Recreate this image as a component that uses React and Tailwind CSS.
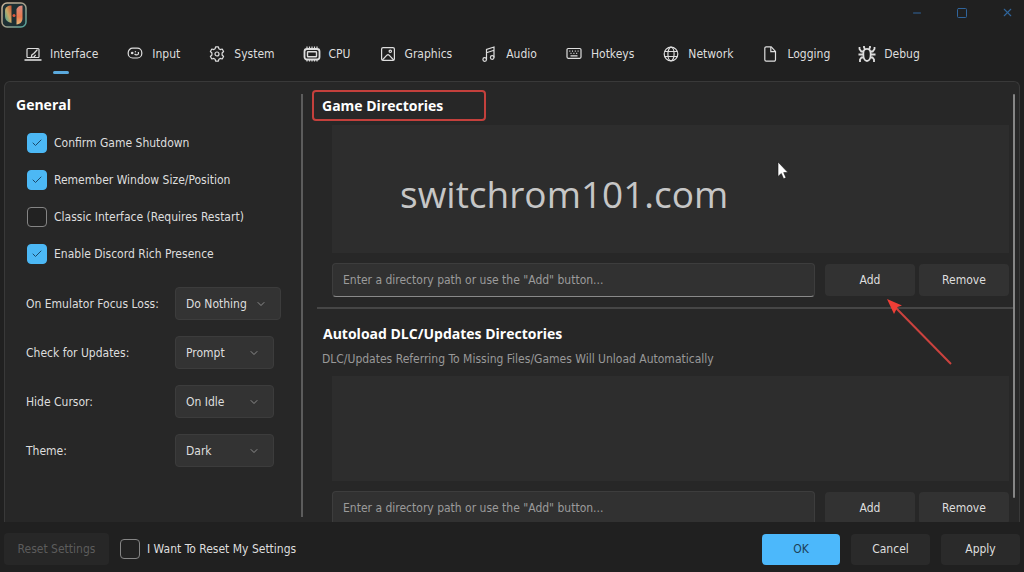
import { useState } from 'react';
import { Check, ChevronDown, Minus, Square, X } from 'lucide-react';

const icons = {
  interface: (
    <>
      <path d="M3 12.5V4.5a1 1 0 0 1 1-1h10a1 1 0 0 1 1 1v8" />
      <path d="M0.5 15h17" strokeWidth="1.6" />
      <path d="M3 12.5h12M13.5 4.5l-3.7 4M9.8 8.5l-2 1.4-.6 2.6 3-.7 1.4-2" />
    </>
  ),
  input: (
    <>
      <rect x="2.2" y="3.2" width="13.6" height="9.8" rx="4.5" />
      <circle cx="6.2" cy="8" r="1.3" fill="currentColor" stroke="none" />
      <path d="M8.6 8.9c.8 1.4 3.4 1.4 3.800 0V6.900" />
      <circle cx="9.400" cy="6.800" r="0.700" fill="currentColor" stroke="none" />
    </>
  ),
  system: (
    <>
      <path d="M7.600 1.800h2.800l.5 2 1.300.8 2-.6 1.400 2.500-1.500 1.500v2l1.500 1.500-1.400 2.500-2-.6-1.300.8-.5 2H7.600l-.5-2-1.300-.8-2 .6-1.400-2.500L3.900 10V8L2.400 6.500 3.800 4l2 .6 1.300-.8z" strokeLinejoin="round" />
      <circle cx="9" cy="9" r="2" />
    </>
  ),
  cpu: (
    <>
      <rect x="1.500" y="4" width="15" height="10.500" rx="2.500" strokeWidth="1.800" />
      <rect x="4.500" y="6.800" width="9" height="5" rx="0.500" strokeWidth="1.400" />
      <path d="M4 3.500V1.500M6.500 3.500V1.500M9 3.500V1.500M11.500 3.500V1.500M14 3.500V1.500M4 15v1.500M6.500 15v1.500M9 15v1.500M11.500 15v1.500M14 15v1.500" />
    </>
  ),
  graphics: (
    <>
      <rect x="2.600" y="2.600" width="12.800" height="12.800" rx="1.500" />
      <circle cx="11.300" cy="6.300" r="1.200" />
      <path d="M3.300 15l4.600-4.800q1.100-1 2.200 0l4.600 4.800" />
    </>
  ),
  audio: (
    <>
      <path d="M6.500 14.500V4.500L14 2v10.500M6.500 7.700L14 5.200" />
      <circle cx="4.700" cy="14.500" r="1.800" />
      <circle cx="12.200" cy="12.500" r="1.800" />
    </>
  ),
  hotkeys: (
    <>
      <rect x="2" y="3.500" width="14" height="9.800" rx="1.200" />
      <path d="M4.300 6.200h1M7 6.200h1M9.800 6.200h1M12.600 6.200h1M5.500 8.300h1M8.400 8.300h1M11.200 8.300h1M5.500 10.800h7" />
    </>
  ),
  network: (
    <>
      <circle cx="9" cy="9" r="6.800" />
      <ellipse cx="9" cy="9" rx="3.100" ry="6.800" />
      <path d="M2.800 6.500h12.400M2.800 11.500h12.400" />
    </>
  ),
  logging: (
    <>
      <path d="M5.200 1.800h5l4.300 4.600v8.400a1.400 1.400 0 0 1-1.400 1.400H5.200a1.400 1.400 0 0 1-1.400-1.400V3.200a1.400 1.400 0 0 1 1.400-1.400z" />
      <path d="M9.800 2v4.700h4.500" />
    </>
  ),
  debug: (
    <g strokeWidth="1.800">
      <path d="M9 3.800c2.600 0 3.700 1.700 3.700 5.200S11.400 16 9 16s-3.700-3.500-3.700-7S6.400 3.800 9 3.800z" />
      <path d="M6 1v1.500l1 1.500M12 1v1.500L11 4M5.500 6.500H3.300L1.500 4V2M12.500 6.500h2.200L16.500 4V2M5.300 9.500H.5M12.700 9.500h4.800M5.600 12.500H3.500L2 14.500V17M12.400 12.500h2.100l1.500 2V17" />
    </g>
  ),
};

const tabs = [
  { id: 'interface', label: 'Interface' },
  { id: 'input', label: 'Input' },
  { id: 'system', label: 'System' },
  { id: 'cpu', label: 'CPU' },
  { id: 'graphics', label: 'Graphics' },
  { id: 'audio', label: 'Audio' },
  { id: 'hotkeys', label: 'Hotkeys' },
  { id: 'network', label: 'Network' },
  { id: 'logging', label: 'Logging' },
  { id: 'debug', label: 'Debug' },
];

const toggles = [
  { id: 'shutdown', label: 'Confirm Game Shutdown', checked: true },
  { id: 'window', label: 'Remember Window Size/Position', checked: true },
  { id: 'classic', label: 'Classic Interface (Requires Restart)', checked: false },
  { id: 'discord', label: 'Enable Discord Rich Presence', checked: true },
];

const selects = [
  { id: 'focus', label: 'On Emulator Focus Loss:', options: ['Do Nothing', 'Block Input', 'Mute Audio', 'Pause'], wide: true },
  { id: 'updates', label: 'Check for Updates:', options: ['Prompt', 'Off', 'Background'] },
  { id: 'cursor', label: 'Hide Cursor:', options: ['On Idle', 'Never', 'Always'] },
  { id: 'theme', label: 'Theme:', options: ['Dark', 'Light', 'Auto'] },
];

const Logo = () => (
  <svg width="26" height="26" viewBox="0 0 26 26" aria-hidden="true">
    <defs>
      <linearGradient id="logoFrame" x1="0" y1="0" x2="1" y2="1">
        <stop offset="0" stopColor="#c9b49a" />
        <stop offset="0.5" stopColor="#a9a08c" />
        <stop offset="1" stopColor="#4fa39c" />
      </linearGradient>
      <linearGradient id="logoLeft" x1="1" y1="0" x2="0" y2="1">
        <stop offset="0" stopColor="#c9502f" />
        <stop offset="0.5" stopColor="#c9a866" />
        <stop offset="1" stopColor="#2fa79a" />
      </linearGradient>
      <linearGradient id="logoRight" x1="0" y1="0" x2="0" y2="1">
        <stop offset="0" stopColor="#d98a80" />
        <stop offset="0.6" stopColor="#e8794e" />
        <stop offset="1" stopColor="#e8b878" />
      </linearGradient>
    </defs>
    <rect x="1" y="1" width="24" height="24" rx="5" fill="#1d2f33" stroke="url(#logoFrame)" strokeWidth="1.5" />
    <path d="M10.500 3.500v17.500C6 20 4 17.500 4 14V8.500c0-3 2.500-5 6.500-5z" fill="url(#logoLeft)" />
    <path d="M15.500 7c1.500-2.500 3-3.500 6-3.500V16c0 3.500-2 6-6 6.500z" fill="url(#logoRight)" />
    <circle cx="13" cy="13.500" r="1.500" fill="#e0563c" />
  </svg>
);

const CheckBox = ({ id, label, defaultChecked = false }) => (
  <label htmlFor={id} className="flex items-center gap-[7px]">
    <span className="grid">
      <input
        id={id}
        type="checkbox"
        defaultChecked={defaultChecked}
        className="peer col-start-1 row-start-1 size-5 appearance-none rounded border border-[#858585] bg-[#222222] checked:border-[#4cb8f5] checked:bg-[#4cb8f5]"
      />
      <Check
        size={12}
        strokeWidth={2}
        className="pointer-events-none invisible col-start-1 row-start-1 place-self-center text-[#1c4a6b] peer-checked:visible"
      />
    </span>
    {label}
  </label>
);

const DirectoryRow = ({ id, children }) => (
  <div className="ml-5 mr-1 flex items-center">
    <input
      id={id}
      type="text"
      aria-label="Directory path"
      placeholder={'Enter a directory path or use the "Add" button...'}
      className="h-[34px] min-w-0 flex-1 rounded border border-[#3d3d3d] border-b-[#8a8a8a] bg-[#313131] px-[10px] placeholder:text-[#9b9b9b]"
    />
    <div className="relative ml-[10px]">
      <button type="button" className="h-8 w-[90px] rounded bg-[#323232]">Add</button>
      {children}
    </div>
    <button type="button" className="ml-1 h-8 w-[90px] rounded bg-[#323232]">Remove</button>
  </div>
);

const App = () => {
  const [active, setActive] = useState('interface');

  return (
    <div className="flex h-screen flex-col overflow-hidden bg-[#202020] font-['DejaVu_Sans_Condensed','Noto_Sans',sans-serif] text-xs text-[#dedede]">
      <header className="flex h-[30px] shrink-0 items-start justify-between pr-[10px] pl-px">
        <div className="pt-[2px]"><Logo /></div>
        <div className="flex gap-[33px] pt-[6px] text-[#30659c]">
          <button type="button" aria-label="Minimize"><Minus size={12} strokeWidth={2} /></button>
          <button type="button" aria-label="Maximize"><Square size={12} strokeWidth={2} /></button>
          <button type="button" aria-label="Close"><X size={13} strokeWidth={2} /></button>
        </div>
      </header>

      <nav className="flex h-[51px] shrink-0 pl-[10px]">
        {tabs.map(({ id, label }) => (
          <button
            key={id}
            type="button"
            onClick={() => setActive(id)}
            className="flex flex-col items-center px-[14px] pt-[14px]"
          >
            <span className="flex h-5 items-center gap-2">
              <svg width="18" height="18" viewBox="0 0 18 18" fill="none" stroke="currentColor" strokeWidth="1.2" aria-hidden="true">
                {icons[id]}
              </svg>
              {label}
            </span>
            {active === id && <span className="mt-[7px] h-[3px] w-4 rounded-full bg-[#5aa9dd]" />}
          </button>
        ))}
      </nav>

      <main className="mx-1 flex min-h-0 flex-1 overflow-hidden rounded-t-md border border-b-0 border-[#393939] bg-[#272727]">
        <section className="w-[296px] shrink-0 pt-[13px] pl-[11px]">
          <h2 className="font-['Open_Sans',sans-serif] text-sm leading-5 font-bold text-white">General</h2>
          <div className="mt-[18px] flex flex-col gap-[17px] pl-[11px]">
            {toggles.map((t) => (
              <CheckBox key={t.id} id={t.id} label={t.label} defaultChecked={t.checked} />
            ))}
          </div>
          <div className="mt-[23px] flex flex-col gap-4 pl-[10px]">
            {selects.map((s) => (
              <div key={s.id} className="flex items-center">
                <label htmlFor={s.id} className="w-[149px]">{s.label}</label>
                <div className="grid">
                  <select
                    id={s.id}
                    className={`col-start-1 row-start-1 h-[33px] appearance-none rounded border border-[#3c3c3c] bg-[#333333] pl-[10px] ${s.wide ? 'w-[106px]' : 'w-[99px]'}`}
                  >
                    {s.options.map((o) => <option key={o}>{o}</option>)}
                  </select>
                  <ChevronDown
                    size={12}
                    strokeWidth={1.5}
                    className="pointer-events-none col-start-1 row-start-1 mr-[14px] self-center justify-self-end text-[#a8a8a8]"
                  />
                </div>
              </div>
            ))}
          </div>
        </section>

        <div className="mt-3 mb-[5px] w-[2px] shrink-0 bg-[#5c5c5c]" />

        <section className="min-w-0 flex-1 overflow-hidden pt-2 pl-[9px]">
          <h2 className="w-[174px] rounded-sm border-2 border-[#c4403c] px-2 py-1 font-['Open_Sans',sans-serif] text-sm leading-[19px] font-bold text-white">
            Game Directories
          </h2>
          <div className="relative mt-[4px] mr-1 ml-5 h-32 bg-[#2d2d2d]">
            <p className="pt-[42px] pl-[68px] font-['Open_Sans',sans-serif] text-[37px] leading-[54px] text-[#c6c6c6]">switchrom101.com</p>
            <svg className="absolute top-[36px] left-[445px]" width="12" height="20" viewBox="0 0 12 20" aria-hidden="true">
              <path d="M1 1v14.500l3.300-3 2.300 5.300 2.400-1-2.300-5.200H11z" fill="#ffffff" stroke="#1a1a1a" strokeWidth="0.6" />
            </svg>
          </div>
          <div className="mt-[10px]">
            <DirectoryRow id="game-dir">
              <svg className="pointer-events-none absolute top-[34px] left-[60px]" width="70" height="70" viewBox="0 0 70 70" aria-hidden="true">
                <path d="M10 9L66 66" stroke="#cc423e" strokeWidth="2" />
                <path d="M2 1l15 6.500-4.500 1.500-3.500 7z" fill="#ef3e36" />
              </svg>
            </DirectoryRow>
          </div>
          <div className="mt-[10px] ml-[5px] h-[2px] bg-[#464646]" />
          <h2 className="mt-[14px] pl-[11px] font-['Open_Sans',sans-serif] text-sm leading-[22px] font-bold text-white">Autoload DLC/Updates Directories</h2>
          <p className="mt-1 pl-[10px] leading-5 text-[#999999]">
            DLC/Updates Referring To Missing Files/Games Will Unload Automatically
          </p>
          <div className="mt-[7px] mr-1 ml-5 h-[105px] bg-[#2d2d2d]" />
          <div className="mt-[10px]"><DirectoryRow id="dlc-dir" /></div>
        </section>

        <div className="mt-3 mr-1 mb-6 w-[2px] shrink-0 rounded-full bg-[#858585]" />
      </main>

      <footer className="flex h-[50px] shrink-0 items-center gap-[11px] px-1 pt-1">
        <button type="button" disabled className="h-8 w-[105px] rounded bg-[#272727] text-[#5c5c5c]">Reset Settings</button>
        <CheckBox id="reset" label="I Want To Reset My Settings" />
        <div className="ml-auto flex gap-[11px]">
          <button type="button" className="h-[31px] w-[78px] rounded bg-[#4cb8fb] text-[#1d4058]">OK</button>
          <button type="button" className="h-[31px] w-[79px] rounded bg-[#2a2a2a]">Cancel</button>
          <button type="button" className="h-[31px] w-[79px] rounded bg-[#2a2a2a]">Apply</button>
        </div>
      </footer>
    </div>
  );
};

export default App;
